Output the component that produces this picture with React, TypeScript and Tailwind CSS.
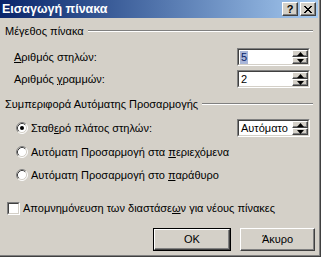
import React from "react";

const Tri = ({ up }: { up: boolean }) => (
  <svg width="7" height="4" viewBox="0 0 7 4" className="block">
    {up ? <path d="M3.5 0 L7 4 L0 4 Z" fill="#000" /> : <path d="M0 0 L7 0 L3.5 4 Z" fill="#000" />}
  </svg>
);

const SpinBtn = ({ up }: { up: boolean }) => (
  <div className="flex-1 flex items-center justify-center bg-[#D4D0C8] border-t border-l border-t-white border-l-white border-b border-r border-b-[#404040] border-r-[#404040] shadow-[inset_-1px_-1px_0_#808080]">
    <Tri up={up} />
  </div>
);

const Spin = ({ children }: { children: React.ReactNode }) => (
  <div className="w-[73px] h-[18px] flex border border-t-[#808080] border-l-[#808080] border-r-white border-b-white">
    <div className="flex-1 flex border border-t-[#404040] border-l-[#404040] border-r-[#D4D0C8] border-b-[#D4D0C8] bg-white">
      <div className="flex-1 pl-[1px] leading-[14px] flex items-center">{children}</div>
      <div className="w-[16px] flex flex-col">
        <SpinBtn up />
        <SpinBtn up={false} />
      </div>
    </div>
  </div>
);

const Radio = ({ checked }: { checked?: boolean }) => (
  <svg width="12" height="12" viewBox="0 0 12 12" className="block shrink-0">
    <circle cx="6" cy="6" r="5" fill="#fff" />
    <path d="M2.11 9.89 A5.5 5.5 0 0 1 9.89 2.11" fill="none" stroke="#808080" strokeWidth="1" />
    <path d="M9.89 2.11 A5.5 5.5 0 0 1 2.11 9.89" fill="none" stroke="#ffffff" strokeWidth="1" />
    <path d="M2.82 9.18 A4.5 4.5 0 0 1 9.18 2.82" fill="none" stroke="#404040" strokeWidth="1" />
    <path d="M9.18 2.82 A4.5 4.5 0 0 1 2.82 9.18" fill="none" stroke="#D4D0C8" strokeWidth="1" />
    {checked && <circle cx="6" cy="6" r="2" fill="#000" />}
  </svg>
);

const U = ({ children }: { children: React.ReactNode }) => <span className="underline underline-offset-[1px]">{children}</span>;

const GroupHeader = ({ label, mt }: { label: string; mt: string }) => (
  <div className={`flex items-center h-[14px] pl-[5px] pr-[5px] ${mt}`}>
    <span className="whitespace-nowrap">{label}</span>
    <div className="flex-1 ml-[4px] h-[2px] border-t border-t-[#808080] border-b border-b-white" />
  </div>
);

const Button = ({ children, def }: { children: React.ReactNode; def?: boolean }) => (
  <div className={`h-[23px] ${def ? "w-[78px] border border-black" : "w-[75px]"} flex`}>
    <div className="flex-1 flex items-center justify-center bg-[#D4D0C8] border-t border-l border-t-white border-l-white border-b border-r border-b-[#404040] border-r-[#404040] shadow-[inset_-1px_-1px_0_#808080]">
      {children}
    </div>
  </div>
);

export default function App() {
  return (
    <div className="w-[321px] h-[257px] border-r border-b border-r-[#404040] border-b-[#404040] font-['Liberation_Sans',Arial,sans-serif] text-[11px] text-black">
      <div className="w-full h-full border-r border-b border-r-[#808080] border-b-[#808080] bg-[#D4D0C8] pr-[1px] pb-[1px]">
        <div className="w-full h-full flex flex-col">
          {/* Title bar */}
          <div className="h-[18px] flex items-center bg-gradient-to-r from-[#0A246A] to-[#A6CAF0] pl-[2px] pr-[2px]">
            <span className="flex-1 text-white font-bold text-[12.5px] leading-none">Εισαγωγή πίνακα</span>
            <div className="flex items-center">
              <div className="w-[16px] h-[14px] flex items-center justify-center bg-[#D4D0C8] border-t border-l border-t-white border-l-white border-b border-r border-b-[#404040] border-r-[#404040] shadow-[inset_-1px_-1px_0_#808080] font-bold text-[11px] leading-none">
                ?
              </div>
              <div className="w-[16px] h-[14px] ml-[2px] flex items-center justify-center bg-[#D4D0C8] border-t border-l border-t-white border-l-white border-b border-r border-b-[#404040] border-r-[#404040] shadow-[inset_-1px_-1px_0_#808080]">
                <svg width="8" height="7" viewBox="0 0 8 7" className="block">
                  <path d="M0 0h2v1h-2zM6 0h2v1h-2zM1 1h2v1h-2zM5 1h2v1h-2zM2 2h4v1h-4zM3 3h2v1h-2zM2 4h4v1h-4zM1 5h2v1h-2zM5 5h2v1h-2zM0 6h2v1h-2zM6 6h2v1h-2z" fill="#000" />
                </svg>
              </div>
            </div>
          </div>

          <GroupHeader label="Μέγεθος πίνακα" mt="mt-[6px]" />

          <div className="flex items-center justify-between h-[18px] mt-[10px] pl-[14px] pr-[8px]">
            <span>
              <U>Α</U>ριθμός στηλών:
            </span>
            <Spin>
              <span className="bg-[#A9B6D8] text-[#0A246A] px-[1px] leading-[13px]">5</span>
            </Spin>
          </div>
          <div className="flex items-center justify-between h-[18px] mt-[4px] pl-[14px] pr-[8px]">
            <span>
              Αριθμός <U>γ</U>ραμμών:
            </span>
            <Spin>
              <span className="px-[1px]">2</span>
            </Spin>
          </div>

          <GroupHeader label="Συμπεριφορά Αυτόματης Προσαρμογής" mt="mt-[9px]" />

          <div className="flex items-center justify-between h-[18px] mt-[8px] pl-[16px] pr-[8px]">
            <div className="flex items-center">
              <Radio checked />
              <span className="ml-[3px]">
                Σταθ<U>ε</U>ρό πλάτος στηλών:
              </span>
            </div>
            <Spin>
              <span className="px-[1px]">Αυτόματο</span>
            </Spin>
          </div>
          <div className="flex items-center h-[14px] mt-[8px] pl-[16px]">
            <Radio />
            <span className="ml-[3px]">
              Αυτόματη Προσαρμογή στα <U>π</U>εριεχόμενα
            </span>
          </div>
          <div className="flex items-center h-[14px] mt-[9px] pl-[16px]">
            <Radio />
            <span className="ml-[3px]">
              Αυτόματη Προσαρμογή στο <U>π</U>αράθυρο
            </span>
          </div>

          <div className="flex items-center h-[14px] mt-[19px] pl-[7px]">
            <div className="w-[13px] h-[13px] border border-t-[#808080] border-l-[#808080] border-r-white border-b-white">
              <div className="w-full h-full bg-white border border-t-[#404040] border-l-[#404040] border-r-[#D4D0C8] border-b-[#D4D0C8]" />
            </div>
            <span className="ml-[3px]">
              Απομνημόνευση των διαστάσε<U>ω</U>ν για νέους πίνακες
            </span>
          </div>

          <div className="flex justify-end items-center mt-[13px] pr-[3px] gap-[9px]">
            <Button def>OK</Button>
            <Button>Άκυρο</Button>
          </div>
        </div>
      </div>
    </div>
  );
}
